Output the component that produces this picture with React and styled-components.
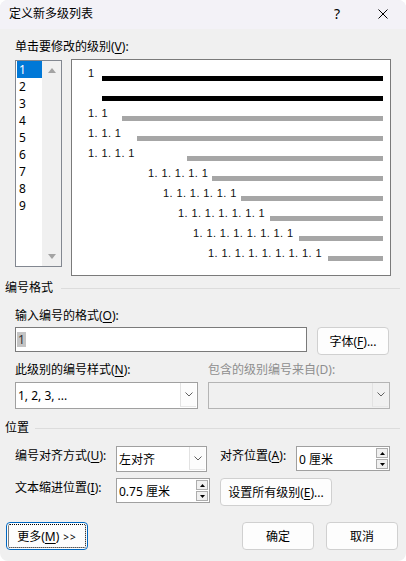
import React from "react";
import styled, { createGlobalStyle } from "styled-components";

const GlobalStyle = createGlobalStyle`
  html, body {
    margin: 0;
    padding: 0;
    background: #ffffff;
  }
  body {
    font-family: "Noto Sans", "Noto Sans CJK SC", sans-serif;
    font-size: 12px;
    color: #000;
  }
`;

const Dialog = styled.div`
  width: 406px;
  height: 561px;
  background: #f0f0f0;
  border-radius: 8px;
  overflow: hidden;
  display: flex;
  flex-direction: column;
`;

const TitleBar = styled.div`
  height: 29px;
  flex: none;
  background: #f3f2f7;
  display: flex;
  align-items: center;
  padding: 0 0 2px 9px;
  box-sizing: border-box;
`;

const Title = styled.div`
  flex: 1;
  line-height: 16px;
`;

const TitleButton = styled.div`
  width: 46px;
  height: 27px;
  display: flex;
  align-items: center;
  justify-content: center;
  font-size: 14px;
`;

const Label = styled.div`
  line-height: 16px;
  white-space: nowrap;
  color: ${(p) => (p.$disabled ? "#8e8e8e" : "#000")};
  padding-top: ${(p) => p.$pt || 0}px;
`;

const Key = styled.span`
  text-decoration: underline;
  text-underline-offset: 2px;
`;

const LevelSection = styled.div`
  padding: 10px 0 0 15px;
`;

const LevelRow = styled.div`
  display: flex;
  align-items: flex-start;
  gap: 9px;
  margin-top: 4px;
`;

const ListBox = styled.div`
  width: 47px;
  height: 207px;
  margin-top: 1px;
  box-sizing: border-box;
  border: 1px solid #828790;
  background: #fff;
  display: flex;
`;

const ListItems = styled.div`
  width: 26px;
  padding-left: 1px;
  box-sizing: border-box;
`;

const ListItem = styled.div`
  height: 17px;
  line-height: 17px;
  padding-left: 2px;
  background: ${(p) => (p.$selected ? "#0078d7" : "transparent")};
  color: ${(p) => (p.$selected ? "#fff" : "#000")};
`;

const ScrollTrack = styled.div`
  flex: 1;
  background: #f0f0f0;
  display: flex;
  flex-direction: column;
  align-items: center;
  justify-content: space-between;
  padding: 7px 0 7px;
`;

const Preview = styled.div`
  width: 320px;
  height: 217px;
  box-sizing: border-box;
  border: 1px solid #7a7a7a;
  background: #fff;
  padding: 1px 7px 0 0;
`;

const PreviewRow = styled.div`
  height: 20px;
  display: flex;
  align-items: flex-end;
`;

const PreviewNum = styled.span`
  font-family: "Liberation Sans", Arial, sans-serif;
  font-size: 11px;
  letter-spacing: 0.4px;
  line-height: 12px;
  white-space: nowrap;
  padding-left: ${(p) => p.$indent}px;
  margin-bottom: 2px;
  color: #111;
`;

const PreviewBar = styled.div`
  margin-left: auto;
  height: 5px;
  width: ${(p) => p.$w}px;
  background: ${(p) => (p.$dark ? "#000" : "#a6a6a6")};
`;

const GroupHeader = styled.div`
  display: flex;
  align-items: center;
  line-height: 16px;
  padding: 0 6px 0 5px;
  margin-top: ${(p) => p.$mt}px;

  &::after {
    content: "";
    flex: 1;
    height: 1px;
    background: #dcdcdc;
    margin-left: ${(p) => p.$gap}px;
  }
`;

const FormatSection = styled.div`
  padding: 12px 0 0 15px;
`;

const InputRow = styled.div`
  display: flex;
  align-items: flex-start;
  gap: 10px;
  margin-top: 3px;
`;

const TextInput = styled.div`
  width: 292px;
  height: 25px;
  box-sizing: border-box;
  border: 1px solid #7a7a7a;
  background: #fff;
  display: flex;
  align-items: center;
  padding-left: 1px;
`;

const Selected = styled.span`
  background: #c4c4c4;
  line-height: 15px;
  padding: 0 1px;
  color: #333;
`;

const Button = styled.button`
  width: ${(p) => p.$w}px;
  height: 28px;
  box-sizing: border-box;
  border: 1px solid ${(p) => (p.$focus ? "#0067c0" : "#d0d0d0")};
  border-radius: 4px;
  background: #fdfdfd;
  font-family: inherit;
  font-size: 12px;
  color: #000;
  padding: 0;
  white-space: nowrap;
  outline: ${(p) => (p.$focus ? "1px dotted #000" : "none")};
  outline-offset: -3px;
`;

const StyleGrid = styled.div`
  display: grid;
  grid-template-columns: 183px 182px;
  column-gap: 10px;
  row-gap: 4px;
  margin-top: 7px;
`;

const Select = styled.div`
  width: ${(p) => p.$w}px;
  height: ${(p) => p.$h}px;
  box-sizing: border-box;
  border: 1px solid ${(p) => (p.$disabled ? "#b4b4b4" : "#a0a0a0")};
  background: ${(p) => (p.$disabled ? "#f0f0f0" : "#fff")};
  display: flex;
  align-items: stretch;
`;

const SelectValue = styled.div`
  flex: 1;
  display: flex;
  align-items: center;
  padding-left: 2px;
`;

const ArrowBox = styled.div`
  width: 16px;
  margin: 0 1px 1px 0;
  box-sizing: border-box;
  border-left: 1px solid #e2e2e2;
  border-bottom: 1px solid #e8e8e8;
  background: ${(p) => (p.$disabled ? "#f0f0f0" : "#fcfcfc")};
  display: flex;
  align-items: center;
  justify-content: center;
`;

const SpinBox = styled.div`
  width: 94px;
  height: 25px;
  box-sizing: border-box;
  border: 1px solid #a0a0a0;
  background: #fff;
  display: flex;
`;

const SpinButtons = styled.div`
  width: 12px;
  margin: 1px 1px 1px 0;
  display: flex;
  flex-direction: column;
  gap: 1px;
`;

const SpinButton = styled.div`
  flex: 1;
  box-sizing: border-box;
  border: 1px solid #adadad;
  background: #f0f0f0;
  display: flex;
  align-items: center;
  justify-content: center;
`;

const PositionGrid = styled.div`
  display: grid;
  grid-template-columns: 101px 104px 76px 94px;
  row-gap: 6px;
  align-items: start;
  padding-left: 15px;
  margin-top: 10px;
`;

const WideCell = styled.div`
  grid-column: 3 / span 2;
`;

const Footer = styled.div`
  display: flex;
  gap: 12px;
  padding: 0 8px 0 6px;
  margin-top: 16px;
`;

const Spacer = styled.div`
  flex: 1;
`;

const Arrows = styled.span`
  font-size: 10px;
  letter-spacing: 1px;
  margin-left: 4px;
`;

const levels = [
  { text: "1", indent: 16, bar: 102, dark: true },
  { text: "", indent: 16, bar: 102, dark: true },
  { text: "1.1", indent: 16, bar: 122 },
  { text: "1.1.1", indent: 16, bar: 137 },
  { text: "1.1.1.1", indent: 16, bar: 187 },
  { text: "1.1.1.1.1", indent: 76, bar: 212 },
  { text: "1.1.1.1.1.1", indent: 91, bar: 241 },
  { text: "1.1.1.1.1.1.1", indent: 106, bar: 270 },
  { text: "1.1.1.1.1.1.1.1", indent: 121, bar: 299 },
  { text: "1.1.1.1.1.1.1.1.1", indent: 136, bar: 328 },
];

const Chevron = () => (
  <svg width="8" height="5" viewBox="0 0 8 5">
    <path d="M0.5 0.5 L4 4 L7.5 0.5" fill="none" stroke="#606060" strokeWidth="1" />
  </svg>
);

const Triangle = ({ down, color = "#000", w = 5, h = 3 }) => (
  <svg width={w} height={h} viewBox={`0 0 ${w} ${h}`}>
    <path
      d={down ? `M0 0 L${w} 0 L${w / 2} ${h}Z` : `M0 ${h} L${w} ${h} L${w / 2} 0Z`}
      fill={color}
    />
  </svg>
);

function Combo({ w, h, value, disabled }) {
  return (
    <Select $w={w} $h={h} $disabled={disabled}>
      <SelectValue>{value}</SelectValue>
      <ArrowBox $disabled={disabled}>
        <Chevron />
      </ArrowBox>
    </Select>
  );
}

function Spin({ value }) {
  return (
    <SpinBox>
      <SelectValue>{value}</SelectValue>
      <SpinButtons>
        <SpinButton>
          <Triangle />
        </SpinButton>
        <SpinButton>
          <Triangle down />
        </SpinButton>
      </SpinButtons>
    </SpinBox>
  );
}

export default function App() {
  return (
    <>
      <GlobalStyle />
      <Dialog>
        <TitleBar>
          <Title>定义新多级列表</Title>
          <TitleButton>?</TitleButton>
          <TitleButton>
            <svg width="10" height="10" viewBox="0 0 10 10">
              <path d="M0.5 0.5 L9.5 9.5 M9.5 0.5 L0.5 9.5" stroke="#000" strokeWidth="1" />
            </svg>
          </TitleButton>
        </TitleBar>

        <LevelSection>
          <Label>
            单击要修改的级别(<Key>V</Key>):
          </Label>
          <LevelRow>
            <ListBox>
              <ListItems>
                {[1, 2, 3, 4, 5, 6, 7, 8, 9].map((n) => (
                  <ListItem key={n} $selected={n === 1}>
                    {n}
                  </ListItem>
                ))}
              </ListItems>
              <ScrollTrack>
                <Triangle color="#a3a3a3" w={8} h={5} />
                <Triangle down color="#a3a3a3" w={8} h={5} />
              </ScrollTrack>
            </ListBox>
            <Preview>
              {levels.map((l, i) => (
                <PreviewRow key={i}>
                  <PreviewNum $indent={l.indent}>{l.text.split(".").join(". ")}</PreviewNum>
                  <PreviewBar $dark={l.dark} $w={383 - l.bar} />
                </PreviewRow>
              ))}
            </Preview>
          </LevelRow>
        </LevelSection>

        <GroupHeader $mt={4} $gap={8}>编号格式</GroupHeader>
        <FormatSection>
          <Label>
            输入编号的格式(<Key>O</Key>):
          </Label>
          <InputRow>
            <TextInput>
              <Selected>1</Selected>
            </TextInput>
            <Button $w={72}>
              字体(<Key>F</Key>)...
            </Button>
          </InputRow>
          <StyleGrid>
            <Label>
              此级别的编号样式(<Key>N</Key>):
            </Label>
            <Label $disabled>包含的级别编号来自(D):</Label>
            <Combo w={183} h={27} value="1, 2, 3, ..." />
            <Combo w={182} h={27} value="" disabled />
          </StyleGrid>
        </FormatSection>

        <GroupHeader $mt={11} $gap={6}>位置</GroupHeader>
        <PositionGrid>
          <Label $pt={2}>
            编号对齐方式(<Key>U</Key>):
          </Label>
          <Combo w={91} h={26} value="左对齐" />
          <Label $pt={2}>
            对齐位置(<Key>A</Key>):
          </Label>
          <Spin value="0 厘米" />
          <Label $pt={2}>
            文本缩进位置(<Key>I</Key>):
          </Label>
          <Spin value="0.75 厘米" />
          <WideCell>
            <Button $w={112}>
              设置所有级别(<Key>E</Key>)...
            </Button>
          </WideCell>
        </PositionGrid>

        <Footer>
          <Button $w={82} $focus>
            更多(<Key>M</Key>)<Arrows>&gt;&gt;</Arrows>
          </Button>
          <Spacer />
          <Button $w={72}>确定</Button>
          <Button $w={72}>取消</Button>
        </Footer>
      </Dialog>
    </>
  );
}
